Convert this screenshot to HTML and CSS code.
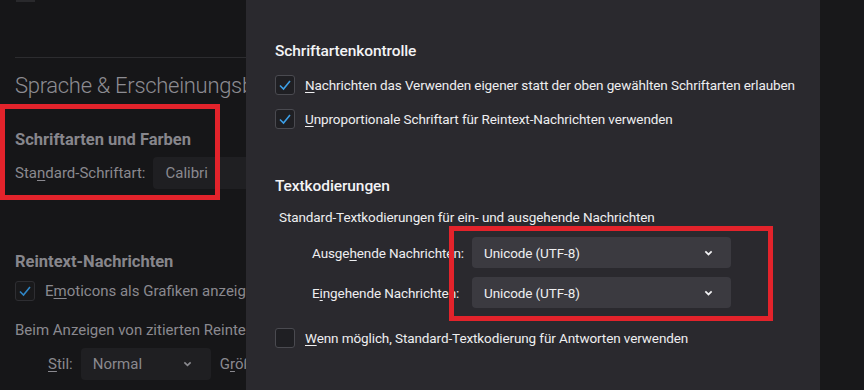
FILE: index.html
```html
<!DOCTYPE html>
<html lang="de">
<head>
<meta charset="utf-8">
<link rel="stylesheet" href="styles.css">
</head>
<body>
<div class="screen">
  <div class="page">
    <div class="top-stub"></div>
    <hr class="sep">
    <h1 class="page-title">Sprache &amp; Erscheinungsbild</h1>
    <h2 class="sec-title first">Schriftarten und Farben</h2>
    <div class="row font-row">
      <span class="lbl">Sta<u>n</u>dard-Schriftart:</span>
      <span class="bg-input">Calibri</span>
    </div>
    <h2 class="sec-title second">Reintext-Nachrichten</h2>
    <div class="check-row bg">
      <span class="box checked"><svg viewBox="0 0 20 20" width="20" height="20"><path d="M5 10.5 L8.5 14 L15 6" fill="none" stroke="#2f86c6" stroke-width="1.6"/></svg></span>
      <span class="lbl">E<u>m</u>oticons als Grafiken anzeigen</span>
    </div>
    <p class="lbl para">Beim Anzeigen von zitierten Reintext-Nachrichten</p>
    <div class="row stil">
      <span class="lbl"><u>S</u>til:</span>
      <span class="bg-select">Normal<svg class="chev" viewBox="0 0 10 6" width="9" height="6"><path d="M1.5 1.2 L5 4.6 L8.5 1.2" fill="none" stroke="#8a8a8f" stroke-width="1.8"/></svg></span>
      <span class="lbl">G<u>r</u>öße:</span>
    </div>
  </div>

  <div class="dialog">
    <h3 class="dlg-title">Schriftartenkontrolle</h3>
    <div class="check-row d1">
      <span class="box checked"><svg viewBox="0 0 20 20" width="20" height="20"><path d="M5 10.5 L8.5 14 L15 6" fill="none" stroke="#3d9fe6" stroke-width="1.6"/></svg></span>
      <span><u>N</u>achrichten das Verwenden eigener statt der oben gewählten Schriftarten erlauben</span>
    </div>
    <div class="check-row d2">
      <span class="box checked"><svg viewBox="0 0 20 20" width="20" height="20"><path d="M5 10.5 L8.5 14 L15 6" fill="none" stroke="#3d9fe6" stroke-width="1.6"/></svg></span>
      <span><u>U</u>nproportionale Schriftart für Reintext-Nachrichten verwenden</span>
    </div>
    <h3 class="dlg-title t2">Textkodierungen</h3>
    <p class="desc">Standard-Textkodierungen für ein- und ausgehende Nachrichten</p>
    <div class="enc-grid">
      <span class="enc-lbl">Ausge<u>h</u>ende Nachrichten:</span>
      <span class="select">Unicode (UTF-8)<svg class="chev" viewBox="0 0 10 6" width="9" height="6"><path d="M1.5 1.2 L5 4.6 L8.5 1.2" fill="none" stroke="#f2f2f4" stroke-width="1.9"/></svg></span>
      <span class="enc-lbl">E<u>i</u>ngehende Nachrichten:</span>
      <span class="select">Unicode (UTF-8)<svg class="chev" viewBox="0 0 10 6" width="9" height="6"><path d="M1.5 1.2 L5 4.6 L8.5 1.2" fill="none" stroke="#f2f2f4" stroke-width="1.9"/></svg></span>
    </div>
    <div class="check-row d3">
      <span class="box"></span>
      <span><u>W</u>enn möglich, Standard-Textkodierung für Antworten verwenden</span>
    </div>
  </div>
  <div class="right-strip"></div>

  <div class="mark mark-left"></div>
  <div class="mark mark-right"></div>
</div>
</body>
</html>
```
FILE: styles.css
```css
* { box-sizing: border-box; }
html, body { margin: 0; padding: 0; }
body {
  width: 864px;
  height: 390px;
  overflow: hidden;
  background: #161618;
  font-family: Roboto, "Noto Sans", sans-serif;
  font-size: 14px;
}
u { text-decoration: underline; text-underline-offset: 2px; text-decoration-thickness: 1px; }
.screen {
  position: relative;
  display: flex;
  width: 864px;
  height: 390px;
}
.page {
  width: 246px;
  flex: none;
  overflow: hidden;
  background: #161618;
  color: #8b8a90;
  padding-left: 15px;
  white-space: nowrap;
}
.top-stub {
  width: 19px;
  height: 2px;
  margin-left: 1px;
  background: #29292c;
}
.sep {
  margin: 55px 0 0 0;
  border: 0;
  border-top: 1px solid #2c2c2f;
  width: 400px;
}
.page-title {
  margin: 13px 0 0 0;
  font-size: 22px;
  font-weight: 300;
  line-height: 30px;
  letter-spacing: -0.3px;
  color: #8d8c92;
}
.sec-title {
  margin: 0;
  font-size: 16.5px;
  font-weight: 700;
  line-height: 22px;
  color: #87868c;
}
.sec-title.first { margin-top: 28px; }
.sec-title.second { margin-top: 62px; }
.row {
  display: flex;
  align-items: center;
  gap: 8px;
}
.row > * { flex: none; }
.lbl { font-size: 15px; color: #8a898f; }
.page .row.font-row { margin-top: 6px; }
.bg-input {
  display: inline-flex;
  align-items: center;
  height: 32px;
  width: 160px;
  padding-left: 12px;
  background: #1f1f22;
  border-radius: 4px;
  font-size: 15px;
  color: #8a898f;
}
.check-row {
  display: flex;
  align-items: center;
  gap: 10px;
}
.box {
  width: 20px;
  height: 20px;
  flex: none;
  border: 1px solid #4a4a50;
  border-radius: 3px;
  background: #1f1f23;
  display: inline-flex;
  align-items: center;
  justify-content: center;
}
.box svg { display: block; margin: -1px; }
.check-row.bg { margin-top: 8px; }
.check-row.bg .box { border-color: #2e2e32; background: #19191b; }
.para { margin: 19px 0 0 0; line-height: 20px; }
.page .row.stil { margin-top: 8px; padding-left: 33px; gap: 8px; }
.page .row.stil .lbl:last-child { margin-left: 1px; }
.bg-select {
  display: inline-flex;
  align-items: center;
  justify-content: space-between;
  width: 130px;
  height: 32px;
  padding: 0 19px 0 12px;
  background: #1f1f22;
  border-radius: 4px;
  font-size: 15px;
  color: #8a898f;
}
.dialog {
  width: 574px;
  flex: none;
  background: #2a292e;
  color: #eeeef0;
  padding-left: 29px;
  white-space: nowrap;
  letter-spacing: -0.1px;
}
.dlg-title {
  margin: 40px 0 0 0;
  font-size: 15.5px;
  font-weight: 500;
  line-height: 22px;
  color: #f3f3f5;
}
.dlg-title.t2 { margin-top: 46px; }
.check-row.d1 { margin-top: 13px; }
.check-row.d2 { margin-top: 14px; }
.check-row.d3 { margin-top: 20px; }
.dialog .check-row span:last-child { font-size: 13.5px; }
.desc {
  margin: 10px 0 0 4px;
  font-size: 13.5px;
  line-height: 20px;
}
.enc-grid {
  display: grid;
  grid-template-columns: 160px 259px;
  row-gap: 9px;
  align-items: center;
  margin: 10px 0 0 37px;
}
.enc-lbl { font-size: 13.5px; }
.select {
  display: flex;
  align-items: center;
  justify-content: space-between;
  height: 31px;
  padding: 0 18px 0 12px;
  background: #3b3a40;
  border-radius: 4px;
  font-size: 13.5px;
}
.chev { display: block; }
.right-strip {
  flex: 1;
  background: #18181a;
}
.mark {
  position: absolute;
  border: 5px solid #e3232b;
}
.mark-left { left: 0; top: 104px; width: 220px; height: 96px; }
.mark-right { left: 449px; top: 226px; width: 324px; height: 95px; }
```
